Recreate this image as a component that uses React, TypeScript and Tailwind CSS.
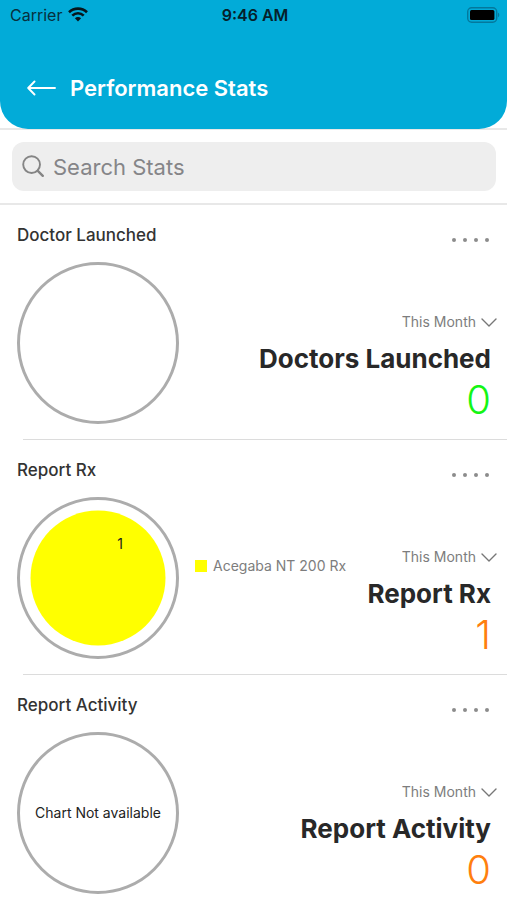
import React from "react";

type Slice = { label: string; count: number };

type Stat = {
  id: string;
  title: string;
  heading: string;
  value: number;
  valueClass: string;
  slice?: Slice;
  message?: string;
};

const stats: Stat[] = [
  {
    id: "doctors",
    title: "Doctor Launched",
    heading: "Doctors Launched",
    value: 0,
    valueClass: "text-[#14f514]",
  },
  {
    id: "rx",
    title: "Report Rx",
    heading: "Report Rx",
    value: 1,
    valueClass: "text-[#ff7f0e]",
    slice: { label: "Acegaba NT 200 Rx", count: 1 },
  },
  {
    id: "activity",
    title: "Report Activity",
    heading: "Report Activity",
    value: 0,
    valueClass: "text-[#ff7f0e]",
    message: "Chart Not available",
  },
];

function WifiIcon() {
  return (
    <svg className="h-4 w-5" viewBox="0 0 20 16" fill="none" stroke="#07161c" strokeWidth="2.6">
      <path d="M1 5.2C6 .4 14 .4 19 5.2" />
      <path d="M4.3 8.7c3.2-3.2 8.2-3.2 11.4 0" />
      <path d="M10 14.4 6.9 11.3c1.8-1.6 4.4-1.6 6.2 0Z" fill="#07161c" stroke="none" />
    </svg>
  );
}

function BatteryIcon() {
  return (
    <svg className="h-4 w-[33px]" viewBox="0 0 33 16" fill="none">
      <rect x="0.7" y="0.7" width="29" height="14.6" rx="4" stroke="#04789c" strokeWidth="1.4" />
      <rect x="3" y="3" width="24.4" height="10" rx="1.5" fill="#000" />
      <path d="M31 5.8c1.7.6 1.7 3.8 0 4.4Z" fill="#04789c" />
    </svg>
  );
}

function StatusBar() {
  return (
    <div className="grid h-[30px] grid-cols-3 items-center pr-[7px] pl-[10px]">
      <div className="flex items-center gap-[6px] text-base text-[#07303d]">
        <span>Carrier</span>
        <WifiIcon />
      </div>
      <div className="text-center text-base font-semibold whitespace-nowrap text-[#06202a]">9:46 AM</div>
      <div className="flex justify-end pb-px">
        <BatteryIcon />
      </div>
    </div>
  );
}

function Header() {
  return (
    <div className="shrink-0 border-b-2 border-[#e8e8e8]">
      <header className="-mb-px h-[129px] rounded-b-[28px] bg-[#02abd8]">
        <StatusBar />
        <div className="flex items-center gap-[14px] pt-[42px] pl-[27px]">
          <button type="button" aria-label="Back" className="flex h-8 items-center">
            <svg className="h-4 w-[29px]" viewBox="0 0 29 16" fill="none" stroke="#fff" strokeWidth="1.9" strokeLinecap="round" strokeLinejoin="round">
              <path d="M28 8H1.5M7.5 1.5 1.2 8l6.3 6.5" />
            </svg>
          </button>
          <h1 className="text-[22px] leading-8 font-semibold text-white">Performance Stats</h1>
        </div>
      </header>
    </div>
  );
}

function SearchBar() {
  return (
    <div className="shrink-0 border-b-2 border-[#e8e8e8] pt-3 pr-[11px] pb-3 pl-3">
      <label className="flex h-[49px] items-center gap-[7px] rounded-xl bg-[#eeeeee] pl-[10px]">
        <svg className="h-6 w-6 shrink-0" viewBox="0 0 24 24" fill="none" stroke="#858585" strokeWidth="1.9" strokeLinecap="round">
          <circle cx="9.6" cy="9.6" r="8.4" />
          <path d="m15.8 15.8 5 5" strokeWidth="2.4" />
        </svg>
        <input
          type="text"
          aria-label="Search Stats"
          placeholder="Search Stats"
          className="min-w-0 flex-1 bg-transparent text-[22px] leading-8 text-[#333333] outline-none placeholder:text-[#858588]"
        />
      </label>
    </div>
  );
}

function Chart({ slice, message }: { slice?: Slice; message?: string }) {
  return (
    <div className="flex size-[162px] shrink-0 items-center justify-center rounded-full border-[3px] border-[#acacac]">
      {slice && (
        <svg className="size-[136px]" viewBox="0 0 136 136">
          <circle cx="68" cy="68" r="67.5" fill="#ffff00" />
          <text x="90" y="39" textAnchor="middle" fontSize="14" fill="#222">
            {slice.count}
          </text>
        </svg>
      )}
      {message && <p className="text-sm whitespace-nowrap text-[#222222]">{message}</p>}
    </div>
  );
}

function StatRow({ stat }: { stat: Stat }) {
  return (
    <li>
      <div className="flex items-start justify-between pt-[18px] pr-[18px] pl-[17px]">
        <h2 className="text-[17px] leading-6 font-medium text-[#333333]">{stat.title}</h2>
        <button type="button" aria-label={`More options for ${stat.title}`} className="mt-[5px] flex h-6 items-center gap-[7px]">
          <span className="size-1 rounded-full bg-[#8c8c8c]" />
          <span className="size-1 rounded-full bg-[#8c8c8c]" />
          <span className="size-1 rounded-full bg-[#8c8c8c]" />
          <span className="size-1 rounded-full bg-[#8c8c8c]" />
        </button>
      </div>
      <div className="flex pt-[10px] pb-[15px] pl-[17px]">
        <Chart slice={stat.slice} message={stat.message} />
        <div className="flex min-w-0 flex-1 items-center pb-6 pl-4">
          {stat.slice && (
            <div className="flex items-center gap-[6px] text-sm whitespace-nowrap text-[#7d7d7d]">
              <span className="size-3 bg-[#ffff00]" />
              <span>{stat.slice.label}</span>
            </div>
          )}
        </div>
        <div className="flex shrink-0 flex-col items-end pt-[50px]">
          <div className="relative mr-[10px] flex h-5 items-center">
            <select
              aria-label={`Period for ${stat.title}`}
              className="field-sizing-content appearance-none bg-transparent pr-[21px] text-sm text-[#7d7d7d]"
            >
              <option>This Month</option>
            </select>
            <svg className="pointer-events-none absolute top-[6px] right-0 h-[9px] w-4" viewBox="0 0 16 9" fill="none" stroke="#777" strokeWidth="1.4" strokeLinecap="round" strokeLinejoin="round">
              <path d="m1 1 7 7 7-7" />
            </svg>
          </div>
          <p className="mt-[11px] mr-4 text-[26px] leading-8 font-bold whitespace-nowrap text-[#282828]">{stat.heading}</p>
          <p className={`mr-4 text-[40px] leading-[49px] font-light ${stat.valueClass}`}>{stat.value}</p>
        </div>
      </div>
      <div className="ml-[23px] h-px bg-[#dcdcdc]" />
    </li>
  );
}

export default function App() {
  return (
    <div className="flex h-screen flex-col overflow-hidden bg-white font-['Inter','Liberation_Sans',sans-serif]">
      <Header />
      <SearchBar />
      <ul className="min-h-0 flex-1 overflow-y-auto [scrollbar-width:none]">
        {stats.map((stat) => (
          <StatRow key={stat.id} stat={stat} />
        ))}
      </ul>
    </div>
  );
}
